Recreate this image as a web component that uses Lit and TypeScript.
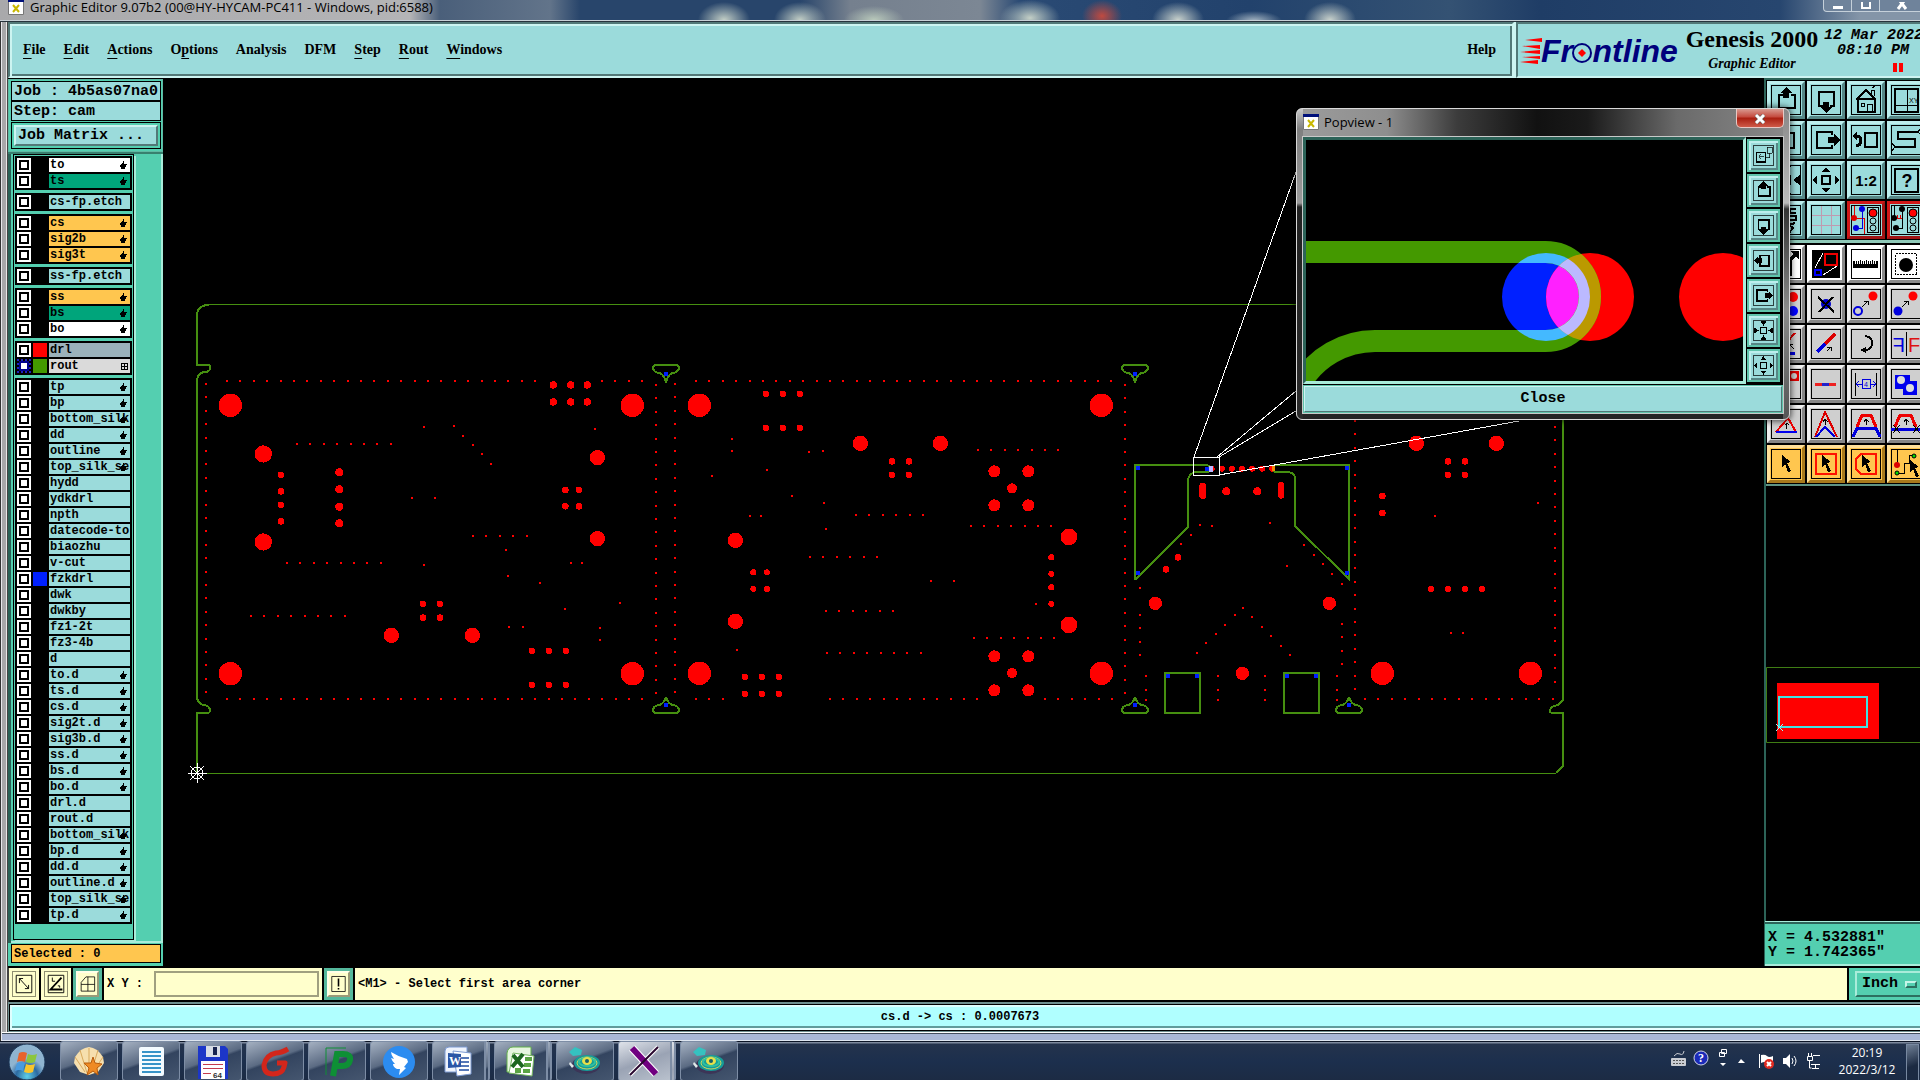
import { LitElement, html, svg, css } from "lit";
import { customElement } from "lit/decorators.js";
import { classMap } from "lit/directives/class-map.js";

type Point = [number, number];

interface Layer {
  name: string;
  tone?: string;
  hand?: boolean;
  grid?: boolean;
  swatch?: string;
  current?: boolean;
}

const L = (name: string, hand = false, tone = ""): Layer => ({ name, hand, tone });

const layerGroups: Layer[][] = [
  [L("to", true, "white"), L("ts", true, "mask")],
  [L("cs-fp.etch")],
  [L("cs", true, "signal"), L("sig2b", true, "signal"), L("sig3t", true, "signal")],
  [L("ss-fp.etch")],
  [L("ss", true, "signal"), L("bs", true, "mask"), L("bo", true, "white")],
  [
    { name: "drl", tone: "drill", swatch: "red" },
    { name: "rout", tone: "routed", swatch: "green", grid: true, current: true },
  ],
  [
    L("tp", true), L("bp", true), L("bottom_silk", true), L("dd", true), L("outline", true),
    L("top_silk_set", true), L("hydd"), L("ydkdrl"), L("npth"), L("datecode-to"), L("biaozhu"),
    L("v-cut"), { name: "fzkdrl", swatch: "blue" }, L("dwk"), L("dwkby"), L("fz1-2t"), L("fz3-4b"),
    L("d"), L("to.d", true), L("ts.d", true), L("cs.d", true), L("sig2t.d", true), L("sig3b.d", true),
    L("ss.d", true), L("bs.d", true), L("bo.d", true), L("drl.d"), L("rout.d"),
    L("bottom_silk", true), L("bp.d", true), L("dd.d", true), L("outline.d", true),
    L("top_silk_set", true), L("tp.d", true),
  ],
];

/* ---------- drawing helpers ---------- */

const circles = (r: number, points: Point[]) =>
  points.map(([x, y]) => svg`<circle cx=${x} cy=${y} r=${r}></circle>`);

const dots = (points: Point[], half = 3) =>
  points.map(([x, y]) => svg`<rect x=${x - half} y=${y - half} width=${half * 2} height=${half * 2}></rect>`);

const row = (x: number, y: number, n: number, step = 40.2): Point[] =>
  Array.from({ length: n }, (_, i) => [x + i * step, y] as Point);

const column = (x: number, y: number, n: number, step = 40.2): Point[] =>
  Array.from({ length: n }, (_, i) => [x, y + i * step] as Point);

const grid = (xs: number[], ys: number[]): Point[] => xs.flatMap((x) => ys.map((y) => [x, y] as Point));

/* Panels are digitised at three units to the pixel. */
const panelOne = svg`
  <g transform="translate(190 290) scale(.33333)">
    ${circles(35, grid([121, 1327], [346, 1151]))}
    ${circles(26, grid([220], [492, 756]))}
    ${circles(23, [[1222, 503], [1222, 746], [604, 1036], [847, 1036]])}
    ${circles(10, grid([273], [555, 604, 645, 694]))}
    ${circles(12, grid([448], [547, 598, 650, 700]))}
    ${circles(11, grid([1090, 1142, 1192], [285, 336]))}
    ${circles(10, grid([1126, 1167], [600, 649]))}
    ${circles(10, grid([699, 750], [942, 983]))}
    ${circles(10, grid([1026, 1077, 1128], [1083, 1185]))}
    ${dots([
      ...row(111, 273, 24), ...row(1236, 273, 4), ...row(111, 1227, 32),
      ...column(48, 282, 24), ...column(1398, 285, 24),
      ...row(321, 462, 8), ...row(291, 819, 8), ...row(183, 978, 8), ...row(849, 738, 5),
      [702, 411], [792, 408], [819, 438], [849, 465], [876, 492], [903, 522], [1216, 417],
      [666, 624], [735, 624], [948, 780], [954, 858], [1050, 879], [702, 825], [1143, 819],
      [1176, 818], [1289, 938], [1125, 957], [956, 1012], [1000, 1010], [1230, 1013], [1230, 1049],
    ])}
  </g>`;

const panelTwo = svg`
  <g transform="translate(660 340) scale(.33333)">
    ${circles(35, grid([118, 1324], [196, 1000]))}
    ${circles(23, [[601, 310], [841, 310], [226, 601], [226, 844]])}
    ${circles(25, grid([1227], [591, 855]))}
    ${circles(18, grid([1003, 1105], [394, 496, 949, 1051]))}
    ${circles(15, grid([1056], [445, 999]))}
    ${circles(10, grid([318, 369, 420], [162, 264]))}
    ${circles(10, grid([696, 747], [364, 405]))}
    ${circles(9, grid([280, 321], [697, 747]))}
    ${circles(10, grid([255, 306, 357], [1011, 1062]))}
    ${circles(9, grid([1174], [652, 702, 742, 792]))}
    ${dots([
      ...row(108, 123, 32), ...row(108, 1077, 3), ...row(510, 1077, 12), ...row(1155, 1077, 6),
      ...column(45, 132, 24), ...column(1395, 135, 24),
      ...row(954, 330, 7), ...row(933, 558, 7), ...row(588, 525, 6), ...row(450, 651, 6),
      ...row(498, 813, 6), ...row(501, 939, 8), ...row(942, 894, 7),
      [215, 298], [215, 334], [155, 409], [322, 390], [397, 467], [447, 336], [490, 334],
      [492, 489], [498, 567], [269, 529], [304, 527], [813, 723], [882, 723], [1129, 793], [231, 930],
    ])}
  </g>`;

const panelThree = svg`
  <g transform="translate(1100 360) scale(.33333)">
    ${circles(35, [[847, 940], [1291, 940]])}
    ${circles(23, [[949, 250], [1189, 250]])}
    ${circles(20, [[427, 940], [166, 730], [688, 730]])}
    ${circles(12, [[379, 394], [472, 394]])}
    ${circles(10, [[234, 592], [198, 628], [847, 408], [847, 459]])}
    ${circles(10, grid([1044, 1095], [304, 345]))}
    ${circles(9, row(993, 687, 4, 51))}
    ${circles(9, row(335, 326, 7, 30.3))}
    <rect x="298" y="369" width="20" height="48" rx="9"></rect>
    <rect x="535" y="366" width="17" height="50" rx="8"></rect>
    ${dots([
      ...column(765, 183, 21), ...column(1365, 201, 20), ...row(795, 1017, 15),
      [120, 684], ...column(120, 765, 4), ...column(726, 792, 4), [726, 672],
      ...grid([138, 354, 495, 712], [949, 990, 1020]),
      [429, 744], [405, 765], [375, 795], [348, 822], [318, 849], [291, 879], [456, 771],
      [486, 801], [513, 828], [543, 858], [570, 885], [300, 495], [337, 497], [273, 525],
      [243, 552], [510, 490], [612, 555], [642, 585], [669, 612], [696, 642], [560, 617],
      [1005, 468], [1315, 428], [1053, 819], [1088, 818], [36, 1017],
    ])}
  </g>`;

const biteTop = (x: number) => svg`
  <path class="rout" transform="translate(${x} 365)"
    d="M-11 0H11Q14 1 13 4Q11 8 6 8Q1 11 0 18Q-1 11-6 8Q-11 8-13 4Q-14 1-11 0Z"></path>`;
const biteBottom = (x: number) => svg`
  <path class="rout" transform="translate(${x} 713)"
    d="M-11 0H11Q14-1 13-4Q11-8 6-8Q1-11 0-16Q-1-11-6-8Q-11-8-13-4Q-14-1-11 0Z"></path>`;

const board = html`
  <svg class="board" viewBox="163 78 1601 887" preserveAspectRatio="xMinYMin meet" role="img" aria-label="Panel drill and rout view">
    <g fill="#ff0000">${panelOne}${panelTwo}${panelThree}</g>
    <g>
      <path class="rout thin" d="M208 304.500H1552M198 773.500H1556"></path>
      <path class="rout" d="M197 773V713H208Q211 712 210 709Q208 705 203 705Q197 703 197 696V380Q198 373 204 372Q210 372 210 368Q211 365 207 365H197V316Q197 305 209 305"></path>
      <path class="rout" d="M1551 305Q1563 305 1563 317V700L1558 705Q1550 706 1550 711Q1550 713 1553 713H1563V766L1556 773"></path>
      ${[666, 1135, 1349].map(biteTop)}
      ${[666, 1135, 1349].map(biteBottom)}
      <path class="rout" d="M1135 465H1207Q1210 466 1210 469Q1210 472 1207 472H1196Q1189 473 1188 480V527L1136 579H1135Z"></path>
      <path class="rout" d="M1349 465H1275Q1273 466 1273 469Q1273 472 1276 472H1288Q1294 473 1295 477V526L1349 579Z"></path>
      <path class="rout" d="M1165 673h35v40h-35zM1284 673h35v40h-35z"></path>
    </g>
    <g fill="#0020ff">
      ${dots([
        [666, 374], [666, 705], [1135, 374], [1135, 705], [1349, 705], [1138, 468], [1207, 469],
        [1347, 468], [1138, 573], [1347, 573], [1168, 676], [1197, 676], [1287, 676], [1316, 676],
      ], 2)}
    </g>
    <path fill="#bbb9ff" d="M1209 466h4v6h-4z"></path>
    <path fill="#ee8800" d="M1272 465h3v6h-3z"></path>
    <g class="callout">
      <rect x="1193.500" y="457.500" width="26" height="18"></rect>
      <path d="M1194 457L1296 172M1217 457L1296 391M1219 457L1296 411M1219 475L1519 421"></path>
    </g>
    <g class="callout">
      <circle cx="197" cy="773" r="6"></circle>
      <path d="M188 773.500H207M197.500 763V783M190 766L204 780M204 766L190 780"></path>
    </g>
  </svg>`;

/* ---------- toolbar icons, drawn on a 38 unit tile ---------- */

const arrows: Record<string, string> = {
  up: "M19 6l6 6h-3v5h-6v-5h-3z",
  down: "M19 32l6-6h-3v-5h-6v5h-3z",
  left: "M5 19l6-6v3h6v6h-6v3z",
  right: "M33 19l-6-6v3h-6v6h6v3z",
};
const star = svg`<path class="f" d="M19 6l4 5h-8zM19 32l4-5h-8zM5 19l5-4v8zM33 19l-5-4v8z"></path><rect class="s2" x="15" y="15" width="8" height="8"></rect>`;
const cursor = (x: number, y: number) =>
  svg`<path class="f" transform="translate(${x} ${y})" d="M0 0l9 7-4 1 4 8-3 1-3-8-3 3z"></path>`;
const signal = svg`
  <rect class="s" x="20.500" y="6.500" width="11" height="25"></rect>
  <circle cx="26" cy="12" r="4" fill="#ff0000" stroke="#000"></circle>
  <circle class="s" cx="26" cy="20" r="3"></circle><circle class="s" cx="26" cy="27" r="3"></circle>`;

interface Tile {
  label: string;
  tone?: string;
  art: unknown;
  plain?: boolean;
}

const tilesTop: Tile[] = [
  { label: "Pan up", art: svg`<path class="s2" d="M16 14h-4v13h16V14h-4"></path><path class="f" d=${arrows.up}></path>` },
  { label: "Pan down", art: svg`<path class="s2" d="M16 25h-4V11h15v14h-4"></path><path class="f" d=${arrows.down}></path>` },
  { label: "Home", art: svg`<path class="s2" d="M9 19l10-10 10 10M11 18v13h17V18z"></path><path class="s" d="M24.500 13V9h3v6M25 7l3-2"></path><path class="s" d="M20.500 31v-8h5v8M14.500 22.500h3v3h-3z"></path>` },
  { label: "Zoom coordinates", art: svg`<rect class="s2" x="8" y="8" width="23" height="23"></rect><path class="s" d="M20.500 8v23M8 24.500h23"></path><text x="22" y="22" class="tiny">XY</text>` },
  { label: "Pan left", art: svg`<path class="s2" d="M14 16v-4h13v15H14v-4"></path><path class="f" d=${arrows.left}></path>` },
  { label: "Pan right", art: svg`<path class="s2" d="M25 14v-3H10v16h15v-3"></path><path class="f" d=${arrows.right}></path>` },
  { label: "Previous view", art: svg`<rect class="s2" x="18" y="12" width="12" height="14"></rect><path class="s3" d="M8 15h3q3 1 3 5t-5 5"></path><path class="f" d="M5 15l5-5v10z"></path>` },
  { label: "Serpentine", art: svg`<path class="s2" d="M32 11H11v7h17v8H8"></path><path class="s" d="M34 7l-3 4 3 3M5 22l3 4-3 4"></path>` },
  { label: "Zoom in", art: svg`<path class="f" d="M19 12l5-7H14zM19 26l5 7H14zM12 19l-7-5v10zM26 19l7-5v10z"></path><rect class="s2" x="15" y="15" width="8" height="8"></rect>` },
  { label: "Zoom out", art: star },
  { label: "Scale", art: svg`<text x="19" y="25" class="scale">1:2</text>` },
  { label: "Query", art: svg`<rect class="s2" x="8" y="8" width="23" height="23"></rect><text x="20" y="26" class="query">?</text>` },
  { label: "Tools", art: svg`<path class="s2" d="M29 8h-6v4h6M18 15h11v4H18zM28 22l-6 2 4 3-4 5"></path>` },
  { label: "Grid", art: svg`<path fill="none" stroke="#c09ab0" d="M14.500 5v28M24.500 5v28M5 14.500h28M5 24.500h28"></path>` },
  { label: "Net display", tone: "alert", art: svg`<path fill="none" stroke="#e00000" d="M7.500 5v11M7 17.500h10V33"></path><path fill="none" stroke="#0000e0" d="M15.500 8v19H9"></path><g fill="#0000e0"><circle cx="15" cy="8" r="3"></circle><circle cx="9" cy="27" r="3"></circle></g><circle cx="7" cy="17" r="3" fill="#e00000"></circle>${signal}` },
  { label: "Short display", tone: "alert", art: svg`<path class="s" d="M7.500 5v12M15.500 8v19H9"></path><path fill="none" stroke="#e00000" d="M9 17.500h6M10.500 14v3M13.500 14v3"></path><g class="f"><circle cx="15" cy="8" r="3"></circle><circle cx="7" cy="17" r="3"></circle><circle cx="9" cy="27" r="3"></circle></g>${signal}` },
];

const tilesEdit: Tile[] = [
  { label: "Resize", tone: "white", art: svg`<path class="s3" d="M18 20l12-12"></path><path class="f" d="M32 6v9l-9-9z"></path><path class="s2" d="M15 16h9v14h-9z"></path>` },
  { label: "Popview", tone: "white", plain: true, art: svg`<rect x="5" y="5" width="28" height="28" fill="#000"></rect><rect x="18" y="9" width="12" height="11" fill="none" stroke="#ee0000" stroke-width="2"></rect><rect x="8" y="25" width="6" height="5" fill="none" stroke="#0000ff" stroke-width="2"></rect><path stroke="#fff" d="M8 23l8-15M16 30l14-9"></path>` },
  { label: "Measure", tone: "white", art: svg`<path class="f" d="M6 16h2v3h1v-3h1v3h1v-3h1v3h1v-4h1v4h1v-3h1v3h1v-3h1v3h1v-4h1v4h1v-3h1v3h1v-3h1v3h1v-4h1v4h1v-3h1v3h1v-3h2v7H6z"></path>` },
  { label: "Select pad", tone: "white", art: svg`<rect class="s" stroke-dasharray="2 1" x="8.500" y="8.500" width="21" height="21"></rect><circle class="f" cx="19" cy="20" r="7"></circle>` },
  { label: "Layer copy", tone: "grey", art: svg`<circle cx="26" cy="12" r="5" fill="#ff0000"></circle><circle cx="26" cy="26" r="5" fill="#0000ff"></circle>` },
  { label: "Delete", tone: "grey", art: svg`<circle cx="19" cy="19" r="5" fill="#0000cc"></circle><path class="s2" d="M11 12l16 15M26 12L12 27"></path>` },
  { label: "Copy pad", tone: "grey", art: svg`<circle cx="11" cy="26" r="4" fill="none" stroke="#0000dd" stroke-width="2"></circle><circle cx="26" cy="11" r="4.500" fill="#ff0000"></circle><path class="s" d="M15 22l6-6M17 16h4v4"></path>` },
  { label: "Move pad", tone: "grey", art: svg`<circle cx="11" cy="26" r="4.500" fill="#0000dd"></circle><circle cx="26" cy="11" r="4.500" fill="#ff0000"></circle><path class="s" d="M15 22l6-6M17 16h4v4"></path>` },
  { label: "Stretch", tone: "grey", art: svg`<path fill="none" stroke="#dd0000" stroke-width="2" d="M20 17l8-9"></path><path fill="none" stroke="#0000dd" stroke-width="3" d="M10 28h18"></path><path class="s" d="M22 19l5 5M22 23v-4h4"></path>` },
  { label: "Extend line", tone: "grey", art: svg`<path stroke="#0000dd" stroke-width="3" d="M10 27l9-9"></path><path stroke="#dd0000" stroke-width="3" d="M18 19l10-10"></path><path class="s" d="M20 26l4-4M20 22h4v4"></path>` },
  { label: "Rotate", tone: "grey", art: svg`<path class="s2" d="M18 11q8 1 7 8t-9 6"></path><path class="f" d="M13 25l6-3v6z"></path>` },
  { label: "Mirror", tone: "grey", art: svg`<path class="s" d="M19.500 7v24"></path><text class="eff blue" transform="translate(18 27) scale(-1 1)">F</text><text class="eff red" x="21" y="27">F</text>` },
  { label: "Frame", tone: "grey", art: svg`<rect x="22" y="6" width="10" height="10" fill="#dd0000"></rect><circle cx="27" cy="11" r="3" fill="#cfcfcf"></circle>` },
  { label: "Break", tone: "grey", art: svg`<path stroke="#ee2222" stroke-width="3" d="M8 19h21"></path><path stroke="#2222cc" stroke-width="3" d="M15 19h7"></path>` },
  { label: "Spacing", tone: "grey", art: svg`<path class="s" d="M8.500 8v23M29.500 8v23"></path><path fill="none" stroke="#0000dd" d="M9 19.500h6M23 19.500h6M12 16l-3 3 3 3M26 16l3 3-3 3M15.500 14.500h8v9h-8z"></path><text class="tiny blue" x="17" y="22">4</text>` },
  { label: "Compare", tone: "grey", art: svg`<path fill="#0000ee" d="M8 10h15v6h7v14H16v-6H8z"></path><circle cx="14" cy="15" r="4" fill="#ddd"></circle><circle cx="23" cy="23" r="4" fill="#ddd"></circle>` },
  { label: "Triangle", tone: "grey", art: svg`<path fill="none" stroke="#ee0000" stroke-width="2" d="M9 27l12-14 8 14"></path><path stroke="#0000ee" stroke-width="2" d="M9 27h21"></path><path class="s" d="M19.500 24v-5M18 20l2-2 2 2"></path>` },
  { label: "Acute angle", tone: "grey", art: svg`<path fill="none" stroke="#dd0000" stroke-width="2" d="M8 32L18 7l12 25"></path><path fill="none" stroke="#0000dd" stroke-width="2" d="M9 32l9-10 10 10"></path><path class="s" d="M18.500 20v-6M16 17l2-3 3 3"></path>` },
  { label: "Trapezoid", tone: "grey", art: svg`<path fill="none" stroke="#0000dd" stroke-width="3" d="M6 32l4-9h19l4 9"></path><path fill="none" stroke="#ee0000" stroke-width="3" d="M10 22l5-12h9l5 12"></path><path class="s" d="M19.500 20v-6M17 17l2-3 3 3"></path>` },
  { label: "Trim trapezoid", tone: "grey", art: svg`<path fill="none" stroke="#ee0000" stroke-width="3" d="M8 22l5-12h11l5 12"></path><path stroke="#0000dd" stroke-width="3" d="M4 24h30"></path><path class="s" d="M19.500 20v-6M17 17l2-3 3 3M6 20l7 8M13 20l-7 8M26 20l7 8M33 20l-7 8"></path>` },
  { label: "Select", tone: "amber", art: cursor(15, 10) },
  { label: "Select window", tone: "amber", art: svg`<rect x="9" y="9" width="20" height="20" fill="none" stroke="#ff1100" stroke-width="2"></rect>${cursor(15, 10)}` },
  { label: "Select polygon", tone: "amber", art: svg`<path fill="none" stroke="#ff1100" stroke-width="2" d="M14 9h15v20H14l-5-5V14z"></path>${cursor(15, 10)}` },
  { label: "Select net", tone: "amber", art: svg`<path class="s" d="M10.500 5v14M11 28.500h6.500V18.500h5v-8h5"></path><circle cx="10" cy="20" r="3" fill="#dd0000"></circle><circle cx="10" cy="28" r="2" fill="#00dd00" stroke="#000"></circle><circle cx="27" cy="11" r="2" fill="#00dd00" stroke="#000"></circle>${cursor(23, 15)}` },
];

const popTiles: Tile[] = [
  { label: "Link view", art: svg`<path class="s2" d="M9 15h13v13H9z"></path><path class="s" d="M24.500 7.500h7v8h-7zM28 16v6h-6M19 21h-7M15 18l-3 3 3 3"></path>` },
  { label: "Pan up", art: tilesTop[0].art },
  { label: "Pan down", art: tilesTop[1].art },
  { label: "Pan left", art: tilesTop[4].art },
  { label: "Pan right", art: tilesTop[5].art },
  { label: "Zoom in", art: tilesTop[8].art },
  { label: "Zoom out", art: star },
];

const hand = html`<svg class="hand" viewBox="0 0 7 8" aria-hidden="true"><path d="M3 0h1v3h3v1H6v2H5v2H1V6H0V4h1V3h1V2h1z"></path></svg>`;

const appMark = html`
  <svg class="appmark" viewBox="0 0 16 16" aria-hidden="true">
    <path fill="#fff" stroke="#777" d="M.500.500h15v15H.500z"></path><path fill="#00107a" d="M0 0h16v3H0z"></path>
    <path stroke="#c9b800" stroke-width="2" d="M5 6l6 7M11 6l-6 7"></path>
  </svg>`;

/* ---------- taskbar art ---------- */

const dish = svg`
  <ellipse cx="17" cy="20" rx="14" ry="9" fill="#3c3557"></ellipse><ellipse cx="18" cy="18" rx="13" ry="8" fill="#159c98"></ellipse>
  <ellipse cx="18" cy="18" rx="10" ry="6" fill="none" stroke="#c8d860"></ellipse>
  <ellipse cx="18" cy="17" rx="8" ry="4" fill="none" stroke="#2fc0a0" stroke-width="2"></ellipse>
  <ellipse cx="18" cy="16" rx="5" ry="4" fill="#e6e04a"></ellipse><circle cx="18" cy="16" r="2" fill="#17606a"></circle>
  <path fill="#35c2c0" d="M0 7l6-5 7 3-1 5-8 1z"></path><path fill="#dfe8e8" d="M1 17l4 4-2 2-3-4z"></path>`;

const taskIcons: { label: string; art: unknown; stack?: boolean; active?: boolean }[] = [
  { label: "Shell", art: svg`<path fill="#f6dfae" d="M16 2l4 1 4 2 3 3 3 4 1 6-6 9-9 3-9-3-6-9 1-6 3-4 3-3 4-2z"></path><path fill="none" stroke="#d9a95c" d="M16 28V3M14 28L7 5M18 28l7-23M12 27L2 12M20 27l10-15"></path><path fill="#ef8a24" stroke="#b85c0c" d="M20 12l2 6 7 1-5 4 1 7-5-4-6 4 2-7-5-5 7 0z"></path>` },
  { label: "Notepad", art: svg`<rect x="4" y="2" width="25" height="29" rx="2" fill="#f4fbff"></rect><path stroke="#3793c8" stroke-width="2" d="M7 7h19M7 11h19M7 15h19M7 19h19M7 23h19M7 27h19"></path>` },
  { label: "Disk manager", art: svg`<path fill="#1c36c8" d="M1 1h27l3 3v30H1z"></path><rect x="9" y="1" width="14" height="11" fill="#d8dde6"></rect><rect x="16" y="2" width="4" height="8" fill="#17234f"></rect><path fill="#fff" d="M4 16h24v18H4z"></path><path stroke="#c43c4c" d="M6 19.500h20M6 23.500h20M6 28.500h8"></path><text x="16" y="33" class="tagtext">64</text>` },
  { label: "G editor", art: svg`<path fill="none" stroke="#d3261b" stroke-width="5" stroke-linejoin="round" d="M29 4q-7 4-12 4-10 2-12 12 0 9 9 9 9 0 11-7l1-4h-8"></path>` },
  { label: "P viewer", art: svg`<path fill="none" stroke="#0e8f35" d="M5 30V3h20"></path><path fill="none" stroke="#0e8f35" stroke-width="6" d="M12 31l4-22h6q8 0 7 6-1 6-8 6h-6"></path>` },
  { label: "DingTalk", art: svg`<circle cx="16" cy="17" r="16" fill="#2c8cf0"></circle><path fill="#fff" d="M8 7q8 5 16 7l1 3-4 5 2 1-7 7 1-6h-3q-4-2-4-5l2 0q-3-3-4-6l3 1q-3-4-3-7z"></path>` },
  { label: "Word", stack: true, art: svg`<path fill="#eef3fc" stroke="#7d9ad2" d="M3 27V6q0-4 4-4h18v25z"></path><path fill="#fff" stroke="#7d9ad2" d="M11 6l18 2v21l-14 2z"></path><path stroke="#5678b8" stroke-width="2" d="M19 13h8M19 17h8M17 21h10M17 25h10"></path><path fill="#2b56a6" d="M6 8l13 1v13L6 23z"></path><text x="7" y="20" class="letter">W</text>` },
  { label: "Excel", stack: true, art: svg`<path fill="#e6f5df" stroke="#62b04a" d="M3 27V8q1-6 6-6h18v25z"></path><path fill="#fff" stroke="#76b861" d="M9 8l21 3-2 20-23-3z"></path><path fill="#5aa444" d="M21 12h7v4h-7zM20 18h7v4h-7zM19 24h7v4h-7zM11 23h6v5h-6z"></path><path stroke="#1d6620" stroke-width="4" d="M9 10l10 12M19 9L8 22"></path>` },
  { label: "Genesis", art: dish },
  { label: "X server", stack: true, active: true, art: svg`<path stroke="#fff" stroke-width="8" d="M4 3l24 26"></path><path stroke="#fff" stroke-width="4" d="M30 2L2 30"></path><path stroke="#700080" stroke-width="6" d="M4 3l24 26"></path><path stroke="#28062e" stroke-width="2" d="M30 2L2 30"></path>` },
  { label: "Genesis session", art: dish },
];

@customElement("app-root")
export class AppRoot extends LitElement {
  static styles = css`
    :host {
      --panel: #9bdbdb;
      --teal: #54cfb0;
      --edge-dark: #527877;
      --edge-light: #cdf4f1;
      display: block;
      position: relative;
      min-height: 100vh;
      overflow: hidden;
      background: #000;
      color: #000;
      font: bold 12px/14px "Liberation Mono", monospace;
    }
    * { box-sizing: border-box; }
    svg { display: block; flex: none; }
    button, input, select { font: inherit; color: inherit; margin: 0; border-radius: 0; }
    .desktop { display: flex; flex-direction: column; min-height: 100vh; }
    .window {
      flex: 1;
      display: flex;
      flex-direction: column;
      margin-right: -7px;
      padding-left: 8px;
      background: linear-gradient(90deg, #333 0 1px, #e8e8ec 1px 2px, #a7a7a9 2px 6px, #e8e8e8 6px 7px, #444 7px 8px);
    }

    .titlebar {
      display: flex;
      align-items: flex-start;
      justify-content: space-between;
      height: 22px;
      margin-left: -8px;
      padding-left: 8px;
      overflow: hidden;
      border-bottom: 1px solid #27333c;
      box-shadow: inset 0 -1px 0 #c8d0d6;
      background:
        radial-gradient(ellipse 26px 18px at 724px 20px, #c3cfc6, transparent),
        radial-gradient(ellipse 26px 18px at 800px 20px, #c3cfc6, transparent),
        radial-gradient(ellipse 30px 14px at 874px 20px, #b9c9bb, transparent),
        radial-gradient(ellipse 30px 18px at 1030px 18px, #c3cfc6, transparent),
        radial-gradient(ellipse 20px 16px at 1102px 16px, #c04a40, transparent),
        radial-gradient(ellipse 26px 18px at 1178px 20px, #c9d2cc, transparent),
        radial-gradient(ellipse 28px 10px at 1254px 21px, #a8b8c4, transparent),
        radial-gradient(ellipse 26px 18px at 1330px 20px, #c9d2cc, transparent),
        linear-gradient(90deg, #a9a9ab 0, #b4b4b6 410px, #4a5f7a 440px, #62748a 550px, #28456b 580px, #28456b 800px, #75808e 850px, #7c8794 980px, #2a4a74 1020px, #22426c 1250px, #345273 1450px, #1f3d66 1540px, #27466f 1780px, #8495a8 1860px, #8495a8 100%);
    }
    .caption { display: flex; align-items: center; gap: 6px; height: 14px; font: 13px/14px "Open Sans", "Noto Sans", sans-serif; }
    .appmark { width: 16px; height: 16px; }
    .winbuttons { display: flex; height: 12px; margin-right: 2px; border: 1px solid #c5d0da; border-top: 0; border-radius: 0 0 4px 4px; background: #6f839b; }
    .winbutton { width: 28px; padding: 0; border: 0; border-right: 1px solid #c5d0da; background: none; }
    .winbutton:last-child { width: 44px; border-right: 0; }
    .winbutton svg { margin: 0 auto; width: 12px; height: 8px; }

    .header { display: flex; gap: 2px; height: 56px; background: var(--edge-light); }
    .menubar {
      flex: 1;
      display: flex;
      align-items: center;
      gap: 18px;
      padding: 0 16px 0 13px;
      background: var(--panel);
      border: 2px solid;
      border-color: var(--edge-dark) var(--edge-light) var(--edge-light) var(--edge-dark);
      box-shadow: inset 2px 2px 0 var(--edge-light), inset -2px -2px 0 var(--edge-dark);
    }
    .menu { padding: 0; border: 0; background: none; font: bold 14px/18px "Liberation Serif", serif; }
    .menu.help { margin-left: auto; }
    .menu u { text-underline-offset: 4px; text-decoration-thickness: 1px; }
    .brand {
      flex: none;
      width: 411px;
      display: flex;
      gap: 5px;
      padding: 3px 0 0 2px;
      background: var(--panel);
      border: 2px solid;
      border-color: var(--edge-dark) transparent var(--edge-light) var(--edge-dark);
    }
    .logo { width: 160px; height: 40px; margin-top: 2px; }
    .logotext { font: italic bold 32px "Liberation Sans", sans-serif; fill: #00007c; }
    .product { width: 134px; text-align: center; }
    .productname { font: bold 24px/24px "Liberation Serif", serif; white-space: nowrap; }
    .productmode { font: italic bold 14px/26px "Liberation Serif", serif; }
    .clock { padding-top: 1px; font: italic bold 15px/15px "Liberation Mono", monospace; white-space: nowrap; }
    .clock div:nth-child(2) { padding-left: 13px; }
    .pause { width: 10px; height: 9px; margin: 5px 0 0 69px; border: solid #f00; border-width: 0 4px; }

    .work { flex: 1; display: flex; padding-bottom: 2px; background: #000; }
    .sidebar {
      flex: none;
      width: 155px;
      display: flex;
      flex-direction: column;
      background: var(--teal);
      border-top: 1px solid #000;
    }
    .jobbox { padding: 2px 2px 3px 3px; box-shadow: inset 0 0 0 1px #5fb9a3; border-bottom: 2px solid #38806f; font-size: 15px; }
    .jobline { padding: 1px 0 0 2px; border: 1px solid #000; background: var(--panel); white-space: nowrap; line-height: 17px; }
    .matrixwrap { margin-top: 1px; padding: 2px; border: 1px solid #000; }
    .bevel {
      display: block;
      background: var(--panel);
      border: 2px solid;
      border-color: var(--edge-light) var(--edge-dark) var(--edge-dark) var(--edge-light);
    }
    .matrix { width: 100%; height: 21px; padding: 0 2px; text-align: left; line-height: 17px; }
    .layerarea { flex: 1; padding: 0 27px 3px 2px; border-right: 2px solid #a9ecda; border-left: 3px solid #2c6358; box-shadow: inset 0 -2px 0 #a9ecda; }
    .layers {
      height: 100%;
      padding: 1px 1px 0 1px;
      border: 1px solid #000;
      box-shadow: 2px 2px 0 #a9ecda;
      background: var(--teal);
      display: flex;
      flex-direction: column;
      gap: 3px;
    }
    .layergroup { display: flex; flex-direction: column; gap: 2px; padding: 2px; background: #000; }
    .layer { display: flex; gap: 2px; height: 14px; }
    .tick { flex: none; appearance: none; width: 10px; height: 10px; margin: 2px 2px; border: 2px solid #000; background: #fff; outline: 2px solid #fff; }
    .tick.current { border-color: #00008b; outline: 2px dotted #2020c0; }
    .swatch { flex: none; width: 14px; height: 14px; background: #000; }
    .swatch.red { background: #f00; }
    .swatch.green { background: #449900; }
    .swatch.blue { background: #0020ff; }
    .layername { flex: 1; display: flex; align-items: center; min-width: 0; padding: 0 3px 0 1px; background: var(--panel); }
    .layername.white { background: #fff; }
    .layername.mask { background: #00a57b; }
    .layername.signal { background: #ffc64f; }
    .layername.drill { background: #9bb2bb; }
    .layername.routed { background: #dadada; }
    .layertext { flex: 1; width: 80px; margin-right: -10px; overflow: hidden; white-space: nowrap; line-height: 14px; }
    .hand { position: relative; width: 7px; height: 8px; }
    .gridmark { width: 5px; height: 5px; background: conic-gradient(#000 0 0) center / 1px 5px no-repeat, conic-gradient(#000 0 0) center / 5px 1px no-repeat; outline: 1px solid #000; }
    .selected { margin: 1px 2px 3px 3px; padding: 2px; height: 19px; border: 1px solid #000; background: #ffc64f; }

    .canvas { flex: 1; min-width: 0; overflow: hidden; background: #000; }
    .board { width: 100%; height: 100%; shape-rendering: crispEdges; }
    .rout { fill: none; stroke: #468f10; stroke-width: 2; }
    .rout.thin { stroke-width: 1; }
    .callout { fill: none; stroke: #fff; stroke-width: 1; }

    .tools { flex: none; width: 163px; display: flex; flex-direction: column; border-left: 2px solid #2c6358; background: #000; }
    .tilegrid { display: grid; grid-template-columns: repeat(4, 38px); grid-auto-rows: 38px; gap: 2px; padding: 1px 1px 0; }
    .tilegrid.first { padding-bottom: 1px; border-top: 2px solid #2c6358; border-bottom: 3px solid #8fc9b8; }
    .tilegrid.second { padding-top: 2px; padding-bottom: 1px; border-bottom: 2px solid #5f9484; }
    .tile { padding: 0; width: 38px; height: 38px; border: 3px solid; border-color: #bdeeed #578786 #578786 #bdeeed; background: var(--panel); }
    .tile svg { width: 38px; height: 38px; margin: -3px; shape-rendering: crispEdges; }
    .tile circle { shape-rendering: auto; }
    .tile.alert { border-color: #d01818 #a01414 #a01414 #d01818; }
    .tile.white { background: #fff; border-color: #fff #8a8a8a #8a8a8a #fff; }
    .tile.grey { background: #cfcfcf; border-color: #f0f0f0 #868686 #868686 #f0f0f0; }
    .tile.amber { background: #ffc64f; border-color: #ffe09a #a87a1c #a87a1c #ffe09a; }
    .f { fill: #000; }
    .s, .s2, .s3 { fill: none; stroke: #000; stroke-width: 1; }
    .s2 { stroke-width: 2; }
    .s3 { stroke-width: 3; }
    .tiny { font: 7px "Liberation Sans", sans-serif; }
    .scale { font: bold 15px "Liberation Sans", sans-serif; text-anchor: middle; }
    .query { font: bold 18px "Liberation Sans", sans-serif; text-anchor: middle; }
    .eff { font: 20px "Liberation Sans", sans-serif; }
    .eff.red { fill: #dd1111; }
    .blue { fill: #0000dd; }
    .overview { flex: 1; min-height: 0; overflow: hidden; }
    .overview svg { width: 161px; height: 100%; }
    .readout { height: 45px; padding: 8px 3px 5px; margin-left: -1px; border-top: 1px solid #a9ecda; border-bottom: 2px solid #a9ecda; box-shadow: inset 0 2px 0 #2c6358; background: var(--teal); font-size: 15px; line-height: 15px; }

    .prompt { display: flex; gap: 2px; height: 34px; padding-bottom: 2px; background: #000; border-left: 1px solid #444; }
    .pbtn { flex: none; width: 30px; padding: 3px; border: 0; background: #ffffcc; }
    .pbtn.on { width: 29px; background: #54b89c; }
    .pbtn svg { width: 100%; height: 100%; border: 1px solid #8f8f70; background: #ffffcc; }
    .pbtn.on svg { border: 2px solid; border-color: #ffffe8 #9a9a78 #9a9a78 #ffffe8; }
    .xy { display: flex; align-items: center; gap: 8px; padding-left: 3px; background: #ffffcc; }
    .xyinput { width: 171px; height: 32px; padding: 0 4px; border: 3px solid #ffffcc; box-shadow: inset 0 0 0 2px #a0a080; background: #ffffcc; }
    .message { flex: 1; display: flex; align-items: center; padding-left: 3px; background: #ffffcc; }
    .unitwrap { flex: none; width: 78px; display: flex; align-items: center; padding-left: 6px; background: var(--teal); }
    .unit { appearance: none; width: 72px; height: 26px; padding: 0 0 0 5px; font-size: 15px; border: 2px solid; border-color: #a9ecda #2c7060 #2c7060 #a9ecda; outline: 0; background: var(--teal); }
    .unitmark { width: 12px; height: 7px; margin-left: -22px; border: 2px solid; border-color: #c5f5e8 #2c7060 #2c7060 #c5f5e8; }

    .status { height: 30px; padding: 1px 16px 0 0; border: 2px solid #6f8f8f; border-width: 2px 0 1px 1px; background: #b0ffff; box-shadow: inset 1px 1px 0 #000, inset 0 -1px 0 #000, inset 3px 3px 0 #dfffff, inset 0 -3px 0 #e8ffff, inset 0 -5px 0 #5f9c9c; text-align: center; line-height: 24px; }
    .frame { height: 9px; margin-left: -6px; background: linear-gradient(#fff 0 1px, #45505e 1px 2px, #aab8d6 2px 8px, #dfe6f0 8px); }

    .taskbar { display: flex; height: 40px; gap: 4px; padding: 0 1px 0 5px; background: linear-gradient(#0c1526 0 1px, #7d899c 1px 2px, #24334c 3px, #1c2f4d 50%, #1c2b43); color: #fff; }
    .start { width: 51px; padding: 2px 0 0 3px; border: 0; background: none; }
    .start svg { width: 38px; height: 37px; }
    .task { width: 58px; padding: 2px 0 0 12px; border: 1px solid #7d8da5; border-bottom-color: #a3afbf; border-radius: 3px; background: linear-gradient(160deg, #a4b0c1 0, #5b6b83 45%, #33445f 50%, #45566f 100%); }
    .task svg { width: 34px; height: 34px; overflow: visible; }
    .task.stack { padding-left: 9px; border-right: 6px double #7d8da5; }
    .task.active { background: linear-gradient(160deg, #dfe3ea, #9aa3b4 50%, #b9c1cd); }
    .tagtext { font: bold 8px "Liberation Sans", sans-serif; fill: #333; }
    .letter { font: bold 12px "Liberation Serif", serif; fill: #fff; }
    .tray { margin-left: auto; display: flex; align-items: center; }
    .tray .icons { width: 150px; height: 34px; }
    .traytime { width: 78px; margin-left: 8px; text-align: center; font: 12px/17px "Open Sans", "Noto Sans", sans-serif; }
    .peek { width: 13px; height: 37px; margin-top: 2px; padding: 0; border: 1px solid #7788a0; background: linear-gradient(160deg, #6f7f95, #1b2a42 60%); }

    .popview {
      position: absolute;
      left: 1296px;
      top: 108px;
      width: 494px;
      display: flex;
      flex-direction: column;
      padding: 0 5px 5px;
      border: 1px solid #d8d8d8;
      border-radius: 6px;
      box-shadow: 0 0 6px 1px rgba(0, 0, 0, .7);
      background: linear-gradient(#c8c8c8 0, #7f7f7f 20px, #9a9a9a 94px, #222 98px, #2b2b2b) left / 6px 100% no-repeat,
        linear-gradient(#888 0, #bbb 94px, #333 100px, #8a8a8a 200px, #555) right / 6px 100% no-repeat,
        linear-gradient(90deg, #9c9c9c 0, #8e8e8e 90px, #3c3c3c 160px, #111 240px, #1a1a1a 290px, #6a6a6a 380px, #8a8a8a) top / 100% 30px no-repeat, #242424;
    }
    .poptitle { display: flex; justify-content: space-between; height: 27px; }
    .poptitle .caption { height: 25px; gap: 5px; padding-left: 1px; line-height: 18px; }
    .popclose { width: 48px; height: 19px; padding: 1px 0 0; border: 1px solid #e8c8c4; border-top: 0; border-radius: 0 0 5px 5px; background: linear-gradient(#d99a90, #c4483c 45%, #a81e10 50%, #cf5a48); }
    .popclose svg { width: 12px; height: 10px; margin: 0 auto; }
    .popbody { border: 1px solid #c9c9c9; background: #000; }
    .popmain { display: flex; }
    .popcanvas { flex: 1; height: 247px; border: 3px solid; border-color: #2c6358 #a9ecda #a9ecda #2c6358; }
    .popcanvas svg { width: 100%; height: 100%; }
    .poptools { display: flex; flex-direction: column; gap: 2px; padding: 2px 3px 0 1px; }
    .poptools .tile { width: 33px; height: 33px; border: 2px solid #5fc4ab; box-shadow: inset 2px 2px 0 #bdeeed, inset -2px -2px 0 #578786; }
    .poptools .tile svg { width: 27px; height: 27px; margin: 1px; }
    .closebtn { width: 100%; height: 28px; margin-top: 1px; padding: 0; font-size: 15px; line-height: 20px; text-align: center; outline: 1px solid #5fc4ab; outline-offset: -1px; }
  `;

  private tile(t: Tile) {
    return html`<button class=${classMap({ tile: true, [t.tone || "aqua"]: true })} aria-label=${t.label}>
      <svg viewBox="0 0 38 38">${t.plain ? "" : svg`<rect class="s" x="4.500" y="4.500" width="29" height="29"></rect>`}${t.art}</svg>
    </button>`;
  }

  private layerRow(layer: Layer) {
    return html`<label class="layer">
      <input type="checkbox" class=${classMap({ tick: true, current: !!layer.current })} />
      <span class=${classMap({ swatch: true, [layer.swatch || "none"]: true })}></span>
      <span class=${classMap({ layername: true, [layer.tone || "plain"]: true })}>
        <span class="layertext">${layer.name}</span>
        ${layer.hand ? hand : ""}${layer.grid ? html`<span class="gridmark"></span>` : ""}
      </span>
    </label>`;
  }

  private menu(before: string, key: string, after: string) {
    return html`<button class="menu">${before}${key ? html`<u>${key}</u>` : ""}${after}</button>`;
  }

  private popview() {
    const band = "M1300 252H1545.500A44.500 44.500 0 0 1 1545.500 341H1375A87 87 0 0 0 1300 384";
    return html`<section class="popview" aria-label="Popview">
      <div class="poptitle">
        <span class="caption">${appMark}Popview - 1</span>
        <button class="popclose" aria-label="Close popview">
          <svg viewBox="0 0 12 10"><path stroke="#555" stroke-width="4" d="M2 1l8 8M10 1L2 9"></path><path stroke="#fff" stroke-width="3" d="M2 1l8 8M10 1L2 9"></path></svg>
        </button>
      </div>
      <div class="popbody">
        <div class="popmain">
          <div class="popcanvas">
            <svg viewBox="1306 140 437 241" preserveAspectRatio="xMinYMin meet" role="img" aria-label="Magnified rout corner">
              <defs>
                <clipPath id="blue"><circle cx="1546" cy="297" r="44"></circle></clipPath>
                <clipPath id="red"><circle cx="1590" cy="297" r="44"></circle><circle cx="1723" cy="297" r="44"></circle></clipPath>
              </defs>
              <circle cx="1546" cy="297" r="44" fill="#0020ff"></circle>
              <circle cx="1590" cy="297" r="44" fill="#ff0000"></circle>
              <circle cx="1723" cy="297" r="44" fill="#ff0000"></circle>
              <g clip-path="url(#blue)"><circle cx="1590" cy="297" r="44" fill="#ff20ff"></circle></g>
              <g fill="none" stroke-width="22">
                <path stroke="#449900" d=${band}></path>
                <g clip-path="url(#blue)"><path stroke="#44b9ff" d=${band}></path></g>
                <g clip-path="url(#red)">
                  <path stroke="#bb9900" d=${band}></path>
                  <g clip-path="url(#blue)"><path stroke="#bbb9ff" d=${band}></path></g>
                </g>
              </g>
            </svg>
          </div>
          <div class="poptools">${popTiles.map((t) => this.tile(t))}</div>
        </div>
        <button class="bevel closebtn">Close</button>
      </div>
    </section>`;
  }

  private header() {
    return html`<header class="header">
      <nav class="menubar">
        ${this.menu("", "F", "ile")}${this.menu("", "E", "dit")}${this.menu("", "A", "ctions")}
        ${this.menu("O", "p", "tions")}${this.menu("Analysis", "", "")}${this.menu("DFM", "", "")}
        ${this.menu("", "S", "tep")}${this.menu("", "R", "out")}${this.menu("", "W", "indows")}
        <button class="menu help">Help</button>
      </nav>
      <div class="brand">
        <svg class="logo" viewBox="0 0 160 40" role="img" aria-label="Frontline">
          <path fill="#f00" d="M5 11l17-2v4zM2 17l18-1v4zM0 23l20-2v4zM2 28l18-1v3zM0 33l18-2v4z"></path>
          <text class="logotext" x="21" y="33">Fr<tspan fill="#9bdbdb">o</tspan>ntline</text>
          <circle cx="62" cy="24" r="9" fill="#9bdbdb" stroke="#00007c" stroke-width="2"></circle>
          <path fill="#f00" d="M62 20l4 4-4 4-4-4z"></path>
        </svg>
        <div class="product">
          <div class="productname">Genesis 2000</div>
          <div class="productmode">Graphic Editor</div>
        </div>
        <div class="clock">
          <div>12 Mar 2022</div>
          <div>08:10 PM</div>
          <div class="pause"></div>
        </div>
      </div>
    </header>`;
  }

  private taskbar() {
    return html`<footer class="taskbar">
      <button class="start" aria-label="Start">
        <svg viewBox="0 0 38 37">
          <defs><radialGradient id="orb" cx=".5" cy=".9"><stop offset="0" stop-color="#5fd0e8"></stop><stop offset=".6" stop-color="#2c6aa2"></stop><stop offset="1" stop-color="#8fb4d0"></stop></radialGradient></defs>
          <circle cx="19" cy="18" r="18" fill="url(#orb)" stroke="#1a3454"></circle>
          <path fill="#e8632c" d="M11 9q4-2 8 0l-2 9q-4-2-8 0z"></path><path fill="#8cc63e" d="M20 10q4 2 9 0l-2 8q-4 2-9 0z"></path>
          <path fill="#4a9be0" d="M9 19q4-2 8 0l-2 8q-4-2-8 0z"></path><path fill="#f8c52c" d="M18 20q4 2 9 0l-2 8q-4 2-9 0z"></path>
        </svg>
      </button>
      ${taskIcons.map((t) => html`<button class=${classMap({ task: true, stack: !!t.stack, active: !!t.active })} aria-label=${t.label}><svg viewBox="0 0 34 34">${t.art}</svg></button>`)}
      <div class="tray">
        <svg class="icons" viewBox="0 0 150 34" role="img" aria-label="Notification icons">
          <rect x="1" y="14" width="15" height="8" rx="1" fill="#c9ccd2"></rect><path stroke="#555" stroke-dasharray="2 1" d="M3 16.500h11M3 19.500h11"></path><path fill="none" stroke="#c9ccd2" d="M4 12q3-4 6-2t4-3"></path>
          <circle cx="31" cy="14" r="7" fill="#1b2ab8" stroke="#d0d4e4"></circle><text x="28" y="18" class="letter">?</text>
          <path fill="none" stroke="#fff" d="M51.500 5.500h5v4h-5zM49.500 8.500h5v4h-5z"></path><path fill="#fff" d="M50 19h6l-3 3zM68 19h7l-4-4z"></path>
          <path fill="#fff" d="M89 10h1v14h-1zM91 11q4-1 6 1t6 0v8q-4 1-6-1t-6 0z"></path><circle cx="99" cy="20" r="5" fill="#e02a20"></circle><path stroke="#fff" stroke-width="2" d="M97 18l4 4M101 18l-4 4"></path>
          <path fill="#fff" d="M113 14h3l4-4v14l-4-4h-3z"></path><path fill="none" stroke="#fff" d="M122 14q2 3 0 6M124 12q4 5 0 10"></path>
          <path fill="none" stroke="#fff" stroke-width="1" d="M143 11.500h8v9h-10M142 24.500h7M145.500 21v3M138.500 9v4M141.500 9v4M137.500 12.500h5v4h-5zM139.500 17v7h2"></path>
        </svg>
        <div class="traytime">20:19<br />2022/3/12</div>
        <button class="peek" aria-label="Show desktop"></button>
      </div>
    </footer>`;
  }

  render() {
    return html`<div class="desktop">
      <main class="window">
        <div class="titlebar">
          <span class="caption">${appMark}Graphic Editor 9.07b2 (00@HY-HYCAM-PC411 - Windows, pid:6588)</span>
          <span class="winbuttons">
            <button class="winbutton" aria-label="Minimize"><svg viewBox="0 0 12 8"><path fill="#fff" d="M1 4h10v3H1z"></path></svg></button>
            <button class="winbutton" aria-label="Maximize"><svg viewBox="0 0 12 8"><path fill="none" stroke="#fff" stroke-width="2" d="M2 0v6h8V0"></path></svg></button>
            <button class="winbutton" aria-label="Close window"><svg viewBox="0 0 12 8"><path stroke="#fff" stroke-width="3" d="M2 7l6-8M10 7L4-1"></path></svg></button>
          </span>
        </div>
        ${this.header()}
        <div class="work">
          <aside class="sidebar">
            <div class="jobbox">
              <div class="jobline">Job : 4b5as07na0</div>
              <div class="jobline">Step: cam</div>
              <div class="matrixwrap"><button class="bevel matrix">Job Matrix ...</button></div>
            </div>
            <div class="layerarea">
              <div class="layers">
                ${layerGroups.map((g) => html`<div class="layergroup">${g.map((l) => this.layerRow(l))}</div>`)}
              </div>
            </div>
            <div class="selected">Selected : 0</div>
          </aside>
          <div class="canvas">${board}</div>
          <aside class="tools">
            <div class="tilegrid first">${tilesTop.map((t) => this.tile(t))}</div>
            <div class="tilegrid second">${tilesEdit.map((t) => this.tile(t))}</div>
            <div class="overview">
              <svg viewBox="1766 486 161 435" preserveAspectRatio="xMinYMin meet" role="img" aria-label="Overview">
                <path fill="none" stroke="#3f7d14" d="M1930 667.500H1766.500V742.500H1930"></path>
                <rect x="1777" y="683" width="102" height="56" fill="#f00"></rect>
                <rect x="1779" y="697" width="88" height="30" fill="none" stroke="#3fe4e4" stroke-width="2"></rect>
                <path stroke="#9ff" d="M1776 724l7 7M1783 724l-7 7"></path>
              </svg>
            </div>
            <div class="readout">
              <div>X = 4.532881"</div>
              <div>Y = 1.742365"</div>
            </div>
          </aside>
        </div>
        <div class="prompt">
          <button class="pbtn" aria-label="Line mode"><svg viewBox="0 0 24 26"><path class="s" d="M3.500 3.500h17v19h-17zM7 7l10 11M7 12V7h4M17 14v4h-4"></path></svg></button>
          <button class="pbtn" aria-label="Angle mode"><svg viewBox="0 0 24 26"><path class="s" d="M3.500 3.500h17v19h-17z"></path><path class="s2" d="M18 6L6 19h13"></path><path class="s" d="M8 6v4h3M14 15h2v2"></path></svg></button>
          <button class="pbtn on" aria-label="Grid snap"><svg viewBox="0 0 24 26"><path class="s" d="M4 22V11l6-7h11v18zM12.500 4v18M4 13.500h17"></path></svg></button>
          <div class="xy"><label for="coords">X Y :</label><input id="coords" class="xyinput" type="text" /></div>
          <button class="pbtn on" aria-label="Alert"><svg viewBox="0 0 24 26"><path class="s" d="M3.500 3.500h17v19h-17z"></path><path class="s2" d="M12 6v10M12 18v2"></path></svg></button>
          <div class="message">&lt;M1&gt; - Select first area corner</div>
          <div class="unitwrap">
            <select class="unit" aria-label="Units"><option>Inch</option><option>MM</option></select>
            <span class="unitmark"></span>
          </div>
        </div>
        <div class="status">cs.d -&gt; cs : 0.0007673</div>
        <div class="frame"></div>
      </main>
      ${this.taskbar()}
      ${this.popview()}
    </div>`;
  }
}
